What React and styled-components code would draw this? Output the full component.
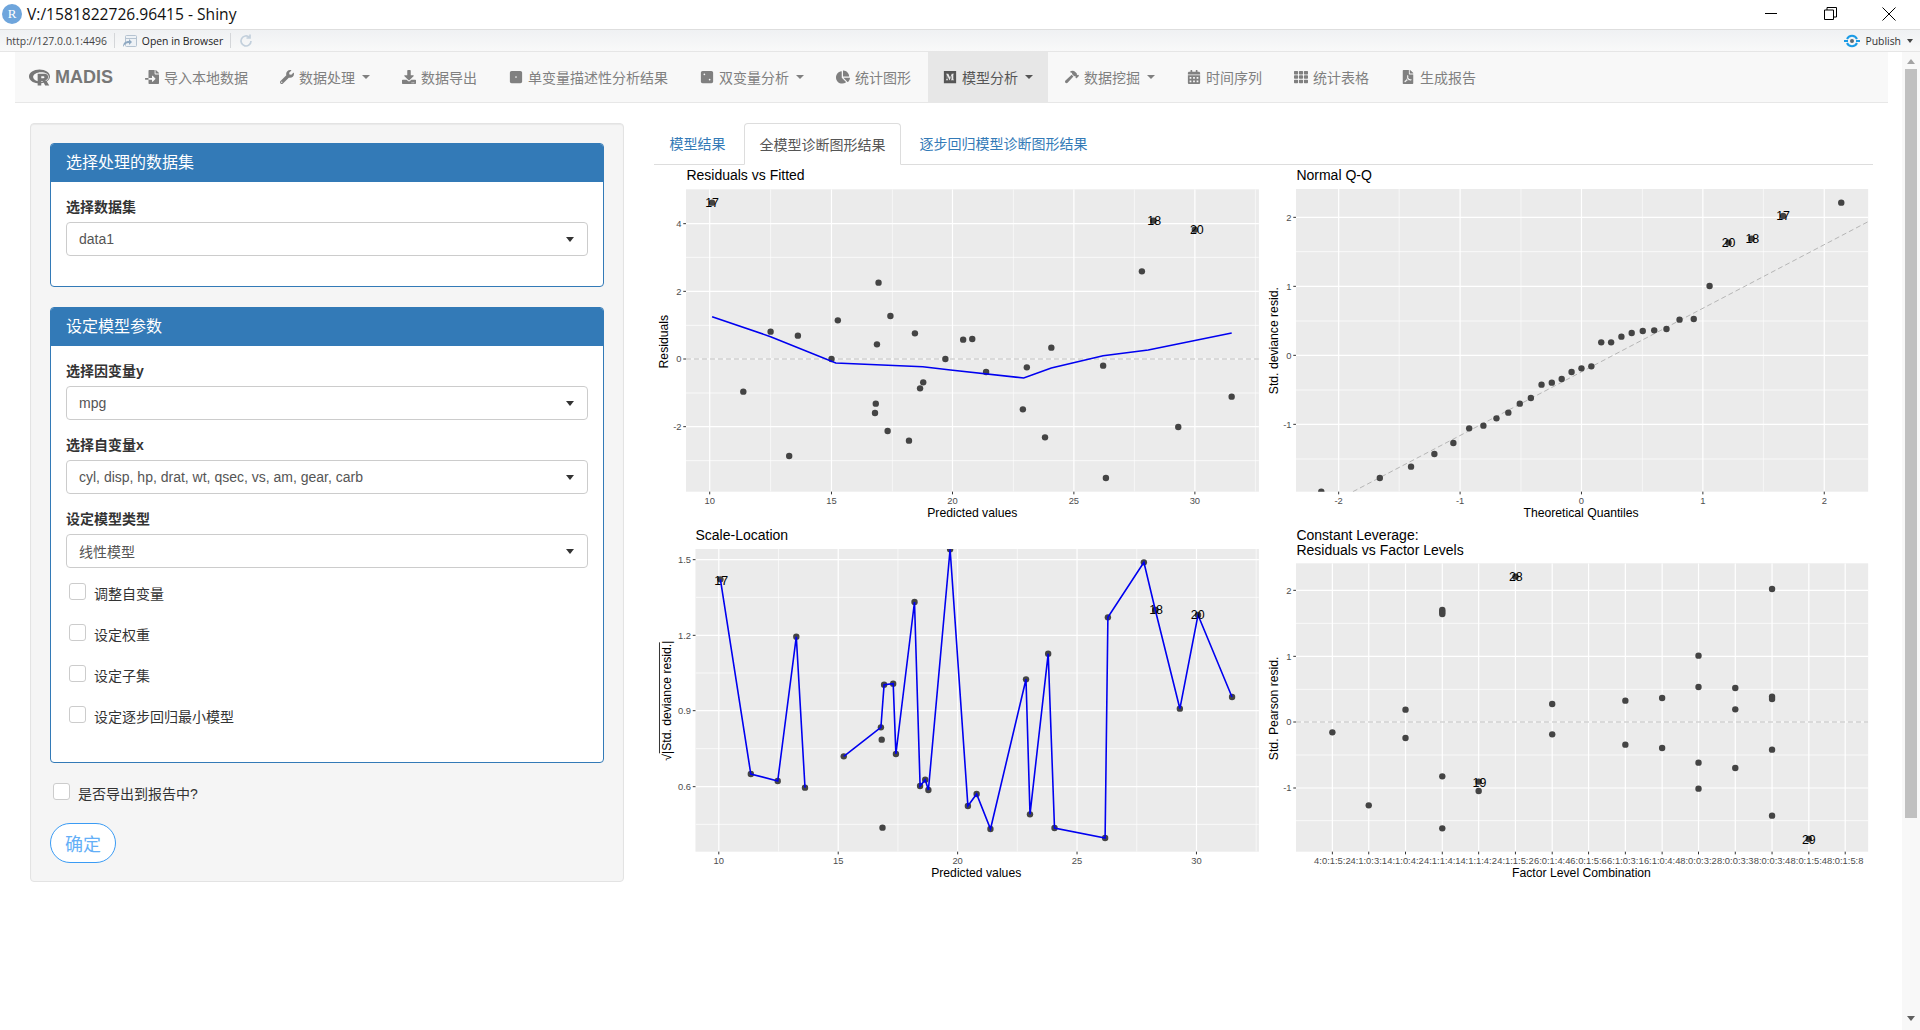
import React from "react";
import styled, { createGlobalStyle } from "styled-components";
import {
  FaRProject, FaFileImport, FaWrench, FaDownload, FaDiceOne, FaDiceTwo, FaChartPie,
  FaMedium, FaHammer, FaCalendarAlt, FaTh, FaFilePdf,
} from "react-icons/fa";

const SANS = `"Liberation Sans", "Noto Sans CJK SC", sans-serif`;

const Global = createGlobalStyle`
  html, body { margin: 0; padding: 0; height: 100%; overflow: hidden; background: #fff; }
  body { font-family: ${SANS}; font-size: 14px; color: #333; }
  * { box-sizing: border-box; }
`;

const Shell = styled.div`
  width: 1920px; height: 1030px; display: flex; flex-direction: column; overflow: hidden; background: #fff;
`;

/* window chrome */
const TitleBar = styled.header`
  height: 30px; flex: none; display: flex; align-items: center; padding: 0 2px 2px 1px;
  background: #fff; border-bottom: 1px solid #dedede;
`;
const RBadge = styled.span`
  width: 20px; height: 20px; border-radius: 50%; background: #6ea5dc; color: #fff; flex: none;
  display: flex; align-items: center; justify-content: center;
  font: 13px "Liberation Serif", serif; margin-right: 5px; margin-left: 1px;
`;
const WindowTitle = styled.span`
  font: 15.6px "Open Sans", sans-serif; color: #111; flex: 1; white-space: nowrap;
`;
const WinButton = styled.button`
  width: 58.6px; height: 28px; border: 0; background: none; padding: 0; display: flex;
  align-items: center; justify-content: center; color: #000;
`;
const Toolbar = styled.div`
  height: 22px; flex: none; display: flex; align-items: center; padding: 0 6px;
  background: linear-gradient(#eff1f3, #f9f9f9); border-bottom: 1px solid #e6e6e6;
  font: 10.4px "Open Sans", sans-serif; color: #222;
`;
const UrlText = styled.span` color: #444; `;
const ToolDivider = styled.span` width: 1px; height: 15px; background: #d4d6d9; margin: 0 7px; `;
const ToolSpacer = styled.span` flex: 1; `;
const PublishText = styled.span` margin: 0 6px 0 4px; color: #333; `;
const TinyCaret = styled.span`
  width: 0; height: 0; border: 3px solid transparent; border-top: 4px solid #444; border-bottom: 0; margin-right: 1px;
`;

/* page */
const Body = styled.div` flex: 1; display: flex; min-height: 0; `;
const Page = styled.main` flex: 1; padding: 0 14px 0 15px; min-width: 0; `;
const ScrollTrack = styled.aside`
  width: 18px; flex: none; background: #f8f8f8; display: flex; flex-direction: column; align-items: center;
`;
const ScrollArrow = styled.span`
  width: 0; height: 0; border-left: 4px solid transparent; border-right: 4px solid transparent; margin: ${p => p.$m};
  ${p => p.$up ? "border-bottom: 5px solid #a3a3a3;" : "border-top: 5px solid #5f5f5f;"}
`;
const ScrollThumb = styled.span` width: 12px; height: 749px; background: #c0c0c0; `;

/* navbar */
const Navbar = styled.nav`
  height: 51px; display: flex; background: #f8f8f8; border-bottom: 1px solid #e7e7e7; color: #777;
`;
const Brand = styled.div`
  width: 115px; flex: none; display: flex; align-items: center; padding-left: 14px;
  font: bold 18px "Liberation Sans", sans-serif; color: #777;
  svg { width: 21px; height: auto; margin-right: 5px; }
`;
const NavList = styled.div` display: flex; gap: 2px; `;
const NavItem = styled.div`
  display: flex; align-items: center; padding: 0 15px 1px; white-space: nowrap;
  color: ${p => p.$active ? "#555" : "#808080"}; background: ${p => p.$active ? "#e7e7e7" : "transparent"};
  svg { height: 14px; width: auto; margin-right: 5px; flex: none; }
`;
const NavCaret = styled.span`
  width: 0; height: 0; margin-left: 7px; border-left: 4px solid transparent; border-right: 4px solid transparent;
  border-top: 4px solid currentColor;
`;

const Row = styled.div` display: flex; gap: 30px; padding: 20px 15px 0; `;

/* sidebar */
const Well = styled.section`
  width: 594px; flex: none; height: 759px; padding: 19px; background: #f5f5f5;
  border: 1px solid #e3e3e3; border-radius: 4px; box-shadow: inset 0 1px 1px rgba(0,0,0,.05);
`;
const Panel = styled.div`
  background: #fff; border: 1px solid #337ab7; border-radius: 4px; margin-bottom: 20px; overflow: hidden;
`;
const PanelHeader = styled.div`
  height: 38px; background: #337ab7; color: #fff; font-size: 16px; line-height: 37px; padding: 0 15px;
`;
const PanelBody = styled.div` padding: 15px; `;
const Field = styled.div` margin-bottom: 15px; `;
const Label = styled.label` display: block; font-weight: bold; line-height: 20px; margin-bottom: 5px; color: #333; `;
const Select = styled.div`
  height: 34px; border: 1px solid #ccc; border-radius: 4px; background: #fff; display: flex; align-items: center;
  justify-content: space-between; padding: 0 13px 0 12px; color: #555;
`;
const SelectCaret = styled.span`
  width: 0; height: 0; border-left: 4px solid transparent; border-right: 4px solid transparent; border-top: 5px solid #333;
`;
const Check = styled.div`
  display: flex; align-items: center; height: 20px; margin-bottom: ${p => p.$mb}px; line-height: 20px; color: #333;
`;
const Box = styled.span`
  width: 17px; height: 17px; margin: -3px 8px 0 3px; border: 1px solid #ccc; border-radius: 3px; background: #fff; flex: none;
`;
const CheckText = styled.span` position: relative; top: 1px; `;
const Confirm = styled.button`
  width: 66px; height: 40px; border-radius: 20px; border: 1px solid #3a9bf4; background: #fff; color: #64aff7;
  font: 18px ${SANS}; padding: 0;
`;

/* tabs */
const Main = styled.section` width: 1219px; flex: none; `;
const Tabs = styled.div` display: flex; gap: 4px; height: 42px; padding-left: 1px; border-bottom: 1px solid #ddd; `;
const Tab = styled.a`
  height: 42px; padding: 1px 14.5px 0; line-height: 41px; white-space: nowrap; color: ${p => p.$active ? "#555" : "#337ab7"};
  ${p => p.$active && "background:#fff; border:1px solid #ddd; border-bottom-color:#fff; border-radius:4px 4px 0 0;"}
`;
const PlotGrid = styled.div` display: grid; grid-template-columns: 610px 610px; grid-auto-rows: 360px; `;
const PlotSvg = styled.svg` display: block; width: 610px; height: 360px; `;
const PlotTitle = styled.text` font: 14px "Liberation Sans", sans-serif; fill: #000; `;
const AxisTitle = styled.text` font: 12.2px "Liberation Sans", sans-serif; fill: #000; text-anchor: middle; `;
const TickText = styled.text` font: 9.4px "Liberation Sans", sans-serif; fill: #4d4d4d; `;
const PointLabel = styled.text` font: 12.4px "Liberation Sans", sans-serif; fill: #000; text-anchor: middle; `;

const seq = (pairs) => pairs.map(([v, l]) => ({ v, l }));

const plots = [
  {
    id: "rvf", vb: "654 165 610 360", ox: 650, oy: 120, box: [91, 1540, 208, 1115],
    title: ["Residuals vs Fitted"], tx: 92, ty: [165],
    xMajor: seq([[151, "10"], [459, "15"], [765, "20"], [1072, "25"], [1378, "30"]]),
    xMinor: [305, 613, 919, 1225, 1531],
    yMajor: seq([[311, "4"], [514, "2"], [717, "0"], [920, "-2"]]),
    yMinor: [412, 616, 819, 1022],
    xlab: ["Predicted values", 815, 1180], ylab: ["Residuals", 35, 665], zero: 717,
    pts: [[157,248],[236,815],[305,635],[352,1008],[374,647],[459,717],[475,601],[569,879],[571,851],[574,673],[578,488],[601,933],[608,588],[655,962],[670,640],[683,805],[691,787],[747,717],[792,659],[815,657],[850,756],[943,868],[953,742],[999,952],[1015,683],[1146,737],[1153,1074],[1244,454],[1273,302],[1336,921],[1378,329],[1471,830]],
    lines: [[[157,590],[305,650],[470,729],[690,740],[760,750],[945,774],[1015,744],[1146,707],[1260,690],[1471,639]]],
    labels: [["17",157,248],["18",1275,302],["20",1383,329]],
  },
  {
    id: "qq", vb: "1264 165 610 360", ox: 1260, oy: 150, box: [91, 1538, 117, 1025],
    title: ["Normal Q-Q"], tx: 92, ty: [75],
    xMajor: seq([[199, "-2"], [506, "-1"], [813, "0"], [1120, "1"], [1427, "2"]]),
    xMinor: [352, 660, 967, 1273],
    yMajor: seq([[202, "2"], [409, "1"], [616, "0"], [823, "-1"]]),
    yMinor: [305, 513, 720, 927],
    xlab: ["Theoretical Quantiles", 812, 1090], ylab: ["Std. deviance resid.", 35, 572],
    ref: [[235,1025],[1538,215]],
    pts: [[155,1025],[303,984],[382,950],[441,912],[489,879],[529,835],[565,827],[598,805],[628,788],[657,761],[685,744],[712,704],[738,698],[763,687],[788,666],[813,655],[838,649],[863,577],[888,577],[914,560],[940,549],[968,543],[997,541],[1028,537],[1061,509],[1097,507],[1137,408],[1185,278],[1243,266],[1323,198],[1470,158]],
    lines: [],
    labels: [["20",1185,278],["18",1245,266],["17",1323,196]],
  },
  {
    id: "sl", vb: "654 525 610 360", ox: 650, oy: 520, box: [115, 1540, 87, 995],
    title: ["Scale-Location"], tx: 115, ty: [45],
    xMajor: seq([[174, "10"], [476, "15"], [778, "20"], [1080, "25"], [1382, "30"]]),
    xMinor: [325, 627, 929, 1231, 1533],
    yMajor: seq([[119, "1.5"], [346, "1.2"], [572, "0.9"], [800, "0.6"]]),
    yMinor: [232, 459, 686, 913],
    xlab: ["Predicted values", 825, 1060], ylab: ["√|Std. deviance resid.|", 42, 542], radical: true,
    pts: [[178,178],[255,762],[323,783],[370,350],[392,803],[490,709],[584,622],[592,494],[615,491],[622,702],[669,246],[683,798],[696,779],[704,810],[759,88],[804,858],[826,822],[861,927],[951,478],[961,883],[1007,401],[1023,924],[1151,954],[1158,292],[1249,127],[1278,270],[1340,566],[1386,285],[1472,531],[586,659],[588,923]],
    lines: [
      [[178,178],[255,762],[323,783],[370,350],[392,803]],
      [[490,709],[584,622],[592,494],[615,491],[622,702],[669,246],[683,798],[696,779],[704,810],[759,88],[804,858],[826,822],[861,927],[951,478],[961,883],[1007,401],[1023,924],[1151,954],[1158,292],[1249,127],[1278,270],[1340,566],[1386,285],[1472,531]],
    ],
    labels: [["17",180,180],["18",1280,269],["20",1385,284]],
  },
  {
    id: "cl", vb: "1264 525 610 360", ox: 1260, oy: 520, box: [91, 1538, 130, 995],
    title: ["Constant Leverage:", "Residuals vs Factor Levels"], tx: 92, ty: [45, 90],
    xMajor: [183,275,368,461,553,646,739,831,924,1017,1109,1202,1295,1388,1480].map((v, i) => ({
      v,
      l: ["4:0:1:5:2","4:1:0:3:1","4:1:0:4:2","4:1:1:4:1","4:1:1:4:2","4:1:1:5:2","6:0:1:4:4","6:0:1:5:6","6:1:0:3:1","6:1:0:4:4","8:0:0:3:2","8:0:0:3:3","8:0:0:3:4","8:0:1:5:4","8:0:1:5:8"][i],
    })),
    xMinor: [],
    yMajor: seq([[211, "2"], [409, "1"], [606, "0"], [804, "-1"]]),
    yMinor: [310, 508, 705, 902],
    xlab: ["Factor Level Combination", 813, 1060], ylab: ["Std. Pearson resid.", 35, 565], zero: 606,
    pts: [[183,637],[275,856],[368,569],[368,654],[461,270],[461,276],[461,282],[461,769],[461,925],[553,813],[553,785],[646,170],[739,552],[739,643],[924,542],[924,674],[1017,534],[1017,684],[1109,407],[1109,501],[1109,728],[1109,806],[1202,504],[1202,568],[1202,744],[1295,207],[1295,530],[1295,537],[1295,689],[1295,887],[1388,957]],
    lines: [],
    labels: [["28",647,170],["19",555,788],["29",1388,957]],
  },
];

function Plot({ p }) {
  const X = (z) => p.ox + z / 2.529;
  const Y = (z) => p.oy + z / 3;
  const [l, r, t, b] = p.box;
  const poly = (pts) => pts.map(([a, c]) => `${X(a).toFixed(1)},${Y(c).toFixed(1)}`).join(" ");
  const clip = `clip-${p.id}`;
  return (
    <PlotSvg viewBox={p.vb}>
      <defs>
        <clipPath id={clip}><rect x={X(l)} y={Y(t)} width={X(r) - X(l)} height={Y(b) - Y(t)} /></clipPath>
      </defs>
      {p.title.map((s, i) => (
        <PlotTitle key={s} x={X(p.tx)} y={Y(p.ty[i]) + 5}>{s}</PlotTitle>
      ))}
      <rect x={X(l)} y={Y(t)} width={X(r) - X(l)} height={Y(b) - Y(t)} fill="#ebebeb" />
      <g clipPath={`url(#${clip})`}>
        {p.xMinor.map((v) => <line key={v} x1={X(v)} x2={X(v)} y1={Y(t)} y2={Y(b)} stroke="#fff" strokeWidth=".6" />)}
        {p.yMinor.map((v) => <line key={v} y1={Y(v)} y2={Y(v)} x1={X(l)} x2={X(r)} stroke="#fff" strokeWidth=".7" />)}
        {p.xMajor.map((m) => <line key={m.v} x1={X(m.v)} x2={X(m.v)} y1={Y(t)} y2={Y(b)} stroke="#fff" strokeWidth="1.2" />)}
        {p.yMajor.map((m) => <line key={m.v} y1={Y(m.v)} y2={Y(m.v)} x1={X(l)} x2={X(r)} stroke="#fff" strokeWidth="1.2" />)}
        {p.zero && <line y1={Y(p.zero)} y2={Y(p.zero)} x1={X(l)} x2={X(r)} stroke="#bdbdbd" strokeWidth="1" strokeDasharray="5 3" />}
        {p.ref && <line x1={X(p.ref[0][0])} y1={Y(p.ref[0][1])} x2={X(p.ref[1][0])} y2={Y(p.ref[1][1])} stroke="#b5b5b5" strokeWidth="1" strokeDasharray="5 3" />}
        {p.pts.map(([a, c], i) => <circle key={i} cx={X(a)} cy={Y(c)} r="3.2" fill="#444" />)}
        {p.lines.map((pts, i) => <polyline key={i} points={poly(pts)} fill="none" stroke="#0000f0" strokeWidth="1.6" />)}
      </g>
      {p.labels.map(([s, a, c]) => <PointLabel key={s} x={X(a)} y={Y(c) + 4.5}>{s}</PointLabel>)}
      {p.xMajor.map((m) => (
        <g key={m.v}>
          <line x1={X(m.v)} x2={X(m.v)} y1={Y(b)} y2={Y(b) + 2.7} stroke="#333" strokeWidth="1" />
          <TickText x={X(m.v)} y={Y(b) + 12} textAnchor="middle">{m.l}</TickText>
        </g>
      ))}
      {p.yMajor.map((m) => (
        <g key={m.v}>
          <line y1={Y(m.v)} y2={Y(m.v)} x1={X(l) - 2.7} x2={X(l)} stroke="#333" strokeWidth="1" />
          <TickText x={X(l) - 4.5} y={Y(m.v) + 3.3} textAnchor="end">{m.l}</TickText>
        </g>
      ))}
      <AxisTitle x={X(p.xlab[1])} y={Y(p.xlab[2]) + 4}>{p.xlab[0]}</AxisTitle>
      <AxisTitle transform={`translate(${X(p.ylab[1]) + 4} ${Y(p.ylab[2])}) rotate(-90)`}>{p.ylab[0]}</AxisTitle>
      {p.radical && <line x1={X(24)} x2={X(24)} y1={Y(367)} y2={Y(700)} stroke="#000" strokeWidth=".8" />}
    </PlotSvg>
  );
}

const navItems = [
  [FaFileImport, "导入本地数据"], [FaWrench, "数据处理", true], [FaDownload, "数据导出"],
  [FaDiceOne, "单变量描述性分析结果"], [FaDiceTwo, "双变量分析", true], [FaChartPie, "统计图形"],
  [FaMedium, "模型分析", true, true], [FaHammer, "数据挖掘", true], [FaCalendarAlt, "时间序列"],
  [FaTh, "统计表格"], [FaFilePdf, "生成报告"],
];

const SelectField = ({ label, value }) => (
  <Field>
    <Label>{label}</Label>
    <Select><span>{value}</span><SelectCaret /></Select>
  </Field>
);

const CheckRow = ({ mb, children }) => (
  <Check $mb={mb}><Box /><CheckText>{children}</CheckText></Check>
);

export default function App() {
  return (
    <Shell>
      <Global />
      <TitleBar>
        <RBadge>R</RBadge>
        <WindowTitle>V:/1581822726.96415 - Shiny</WindowTitle>
        <WinButton><svg width="13" height="13" viewBox="0 0 13 13"><path d="M0 6.5h12" stroke="#000" fill="none" /></svg></WinButton>
        <WinButton><svg width="13" height="13" viewBox="0 0 13 13"><path d="M.5 3h9v9.5h-9zM3 3V.5h9.5V10H9.5" stroke="#000" fill="none" /></svg></WinButton>
        <WinButton><svg width="14" height="14" viewBox="0 0 14 14"><path d="M.5.5l13 13M13.5.5l-13 13" stroke="#000" fill="none" /></svg></WinButton>
      </TitleBar>
      <Toolbar>
        <UrlText>http://127.0.0.1:4496</UrlText>
        <ToolDivider />
        <svg width="15" height="14" viewBox="0 0 15 14" style={{ marginRight: 5 }}>
          <rect x="3.5" y="1.5" width="11" height="11" rx="1" fill="#eef2f6" stroke="#b5c3d1" />
          <path d="M3.5 4.5h11" stroke="#b5c3d1" />
          <path d="M1 13c0-4 2-6 6-6V5l3 3-3 3V9c-3 0-4 1-6 4z" fill="#8fa9c2" />
        </svg>
        <span>Open in Browser</span>
        <ToolDivider />
        <svg width="16" height="16" viewBox="0 0 16 16">
          <path d="M13 8a5 5 0 1 1-1.6-3.7M12 1.500V5H8.500" fill="none" stroke="#c3d0dc" strokeWidth="1.700" />
        </svg>
        <ToolSpacer />
        <svg width="18" height="14" viewBox="0 0 18 14">
          <path d="M1 7h4M13 7h4" stroke="#1a9be6" strokeWidth="2.200" />
          <path d="M4 5a5.500 5.500 0 0 1 10 0M14 9a5.500 5.500 0 0 1-10 0" fill="none" stroke="#1a9be6" strokeWidth="2" />
          <circle cx="9" cy="7" r="2" fill="#5a6b78" />
        </svg>
        <PublishText>Publish</PublishText>
        <TinyCaret />
      </Toolbar>
      <Body>
        <Page>
          <Navbar>
            <Brand><FaRProject />MADIS</Brand>
            <NavList>
              {navItems.map(([Icon, text, caret, active]) => (
                <NavItem key={text} $active={active}>
                  <Icon />{text}{caret && <NavCaret />}
                </NavItem>
              ))}
            </NavList>
          </Navbar>
          <Row>
            <Well>
              <Panel>
                <PanelHeader>选择处理的数据集</PanelHeader>
                <PanelBody>
                  <SelectField label="选择数据集" value="data1" />
                </PanelBody>
              </Panel>
              <Panel>
                <PanelHeader>设定模型参数</PanelHeader>
                <PanelBody>
                  <SelectField label="选择因变量y" value="mpg" />
                  <SelectField label="选择自变量x" value="cyl, disp, hp, drat, wt, qsec, vs, am, gear, carb" />
                  <SelectField label="设定模型类型" value="线性模型" />
                  <CheckRow mb={21}>调整自变量</CheckRow>
                  <CheckRow mb={21}>设定权重</CheckRow>
                  <CheckRow mb={21}>设定子集</CheckRow>
                  <CheckRow mb={21}>设定逐步回归最小模型</CheckRow>
                </PanelBody>
              </Panel>
              <CheckRow mb={20}>是否导出到报告中?</CheckRow>
              <Confirm>确定</Confirm>
            </Well>
            <Main>
              <Tabs>
                <Tab>模型结果</Tab>
                <Tab $active>全模型诊断图形结果</Tab>
                <Tab>逐步回归模型诊断图形结果</Tab>
              </Tabs>
              <PlotGrid>
                {plots.map((p) => <Plot key={p.id} p={p} />)}
              </PlotGrid>
            </Main>
          </Row>
        </Page>
        <ScrollTrack>
          <ScrollArrow $up $m="7px 0 5px" />
          <ScrollThumb />
          <ScrollArrow $m="198px 0 0" />
        </ScrollTrack>
      </Body>
    </Shell>
  );
}
